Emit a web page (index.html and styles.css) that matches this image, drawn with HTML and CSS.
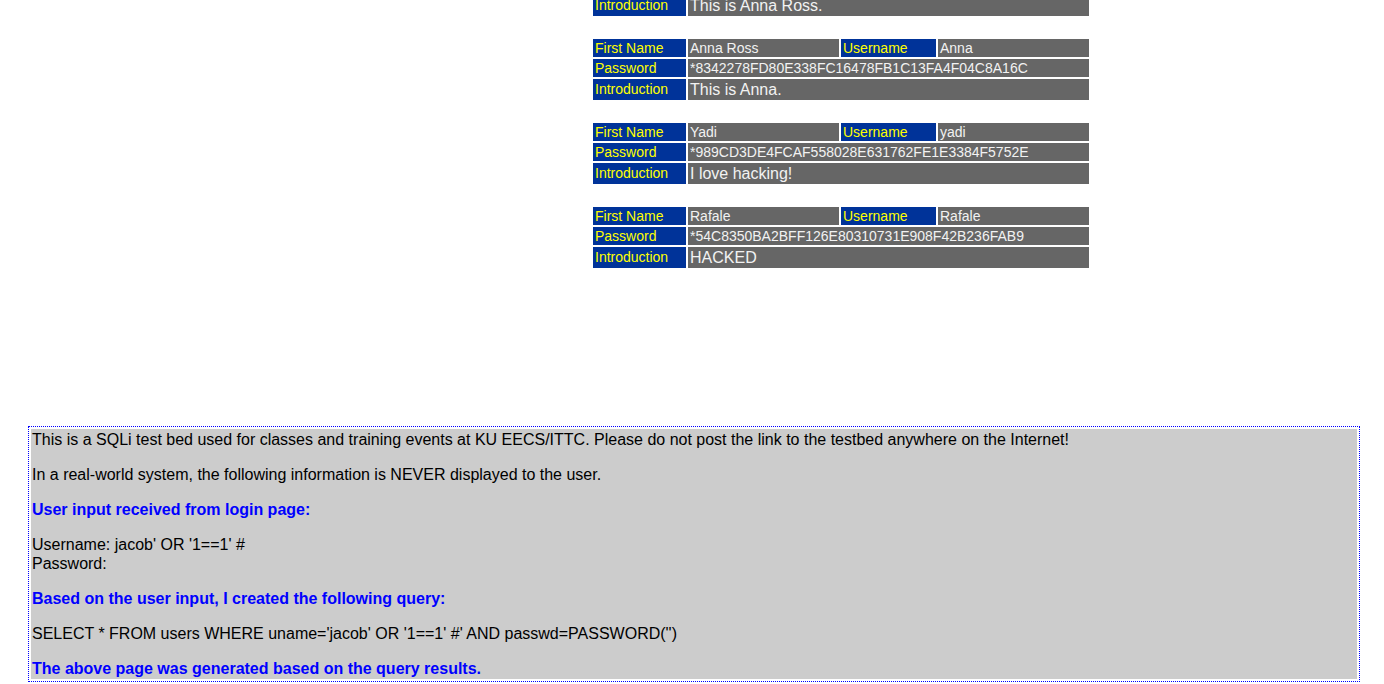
FILE: index.html
```html
<!DOCTYPE html>
<html>
<head>
<meta charset="utf-8">
<title>SQLi test bed</title>
<link rel="stylesheet" href="styles.css">
</head>
<body>
<div class="results">
  <table class="user first">
    <colgroup><col class="c-label"><col class="c-val"><col class="c-label2"><col class="c-val"></colgroup>
    <tr><td class="label intro-label">Introduction</td><td class="val intro" colspan="3">This is Anna Ross.</td></tr>
  </table>

  <table class="user">
    <colgroup><col class="c-label"><col class="c-val"><col class="c-label2"><col class="c-val"></colgroup>
    <tr><td class="label">First Name</td><td class="val">Anna Ross</td><td class="label">Username</td><td class="val">Anna</td></tr>
    <tr><td class="label">Password</td><td class="val" colspan="3">*8342278FD80E338FC16478FB1C13FA4F04C8A16C</td></tr>
    <tr><td class="label intro-label">Introduction</td><td class="val intro" colspan="3">This is Anna.</td></tr>
  </table>

  <table class="user">
    <colgroup><col class="c-label"><col class="c-val"><col class="c-label2"><col class="c-val"></colgroup>
    <tr><td class="label">First Name</td><td class="val">Yadi</td><td class="label">Username</td><td class="val">yadi</td></tr>
    <tr><td class="label">Password</td><td class="val" colspan="3">*989CD3DE4FCAF558028E631762FE1E3384F5752E</td></tr>
    <tr><td class="label intro-label">Introduction</td><td class="val intro" colspan="3">I love hacking!</td></tr>
  </table>

  <table class="user">
    <colgroup><col class="c-label"><col class="c-val"><col class="c-label2"><col class="c-val"></colgroup>
    <tr><td class="label">First Name</td><td class="val">Rafale</td><td class="label">Username</td><td class="val">Rafale</td></tr>
    <tr><td class="label">Password</td><td class="val" colspan="3">*54C8350BA2BFF126E80310731E908F42B236FAB9</td></tr>
    <tr><td class="label intro-label">Introduction</td><td class="val intro" colspan="3">HACKED</td></tr>
  </table>
</div>

<div class="debug">
  <div class="debug-inner">
    <p>This is a SQLi test bed used for classes and training events at KU EECS/ITTC. Please do not post the link to the testbed anywhere on the Internet!</p>
    <p>In a real-world system, the following information is NEVER displayed to the user.</p>
    <p class="hl">User input received from login page:</p>
    <p>Username: jacob' OR '1==1' #<br>Password: </p>
    <p class="hl">Based on the user input, I created the following query:</p>
    <p>SELECT * FROM users WHERE uname='jacob' OR '1==1' #' AND passwd=PASSWORD('')</p>
    <p class="hl">The above page was generated based on the query results.</p>
  </div>
</div>
</body>
</html>
```

FILE: styles.css
```css
html, body {
  margin: 0;
  padding: 0;
  background: #ffffff;
}

body {
  font-family: "Liberation Sans", Arial, sans-serif;
  color: #000000;
}

.results {
  margin-left: 591px;
}

.user {
  width: 500px;
  table-layout: fixed;
  border-collapse: separate;
  border-spacing: 2px;
  margin: 0 0 19px 0;
  font-size: 14px;
}

.user.first {
  margin-top: -7px;
}

.c-label { width: 93px; }
.c-val { width: 151px; }
.c-label2 { width: 95px; }

.user td {
  padding: 1px 2px;
  line-height: 16px;
  white-space: nowrap;
  overflow: hidden;
  vertical-align: top;
}

.label {
  background: #003399;
  color: #ffff00;
}

.user td.intro-label {
  padding-top: 2px;
  padding-bottom: 0;
}

.val {
  background: #666666;
  color: #f2f2f2;
}

.val.intro {
  font-size: 16px;
  line-height: 19px;
}

.debug {
  margin: 156px 24px 0 28px;
  border: 1px dotted #0000ff;
  padding: 2px;
}

.debug-inner {
  background: #cccccc;
  padding: 1px 1px 1px 1px;
  font-size: 16px;
  line-height: 19px;
}

.debug-inner p {
  margin: 16px 0;
}

.debug-inner p:first-child {
  margin-top: 0;
}

.debug-inner p:last-child {
  margin-bottom: 0;
}

.hl {
  color: #0000ff;
  font-weight: bold;
}
```
